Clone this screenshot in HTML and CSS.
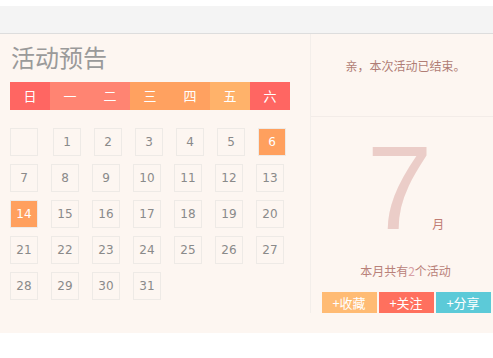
FILE: index.html
```html
<!DOCTYPE html>
<html lang="zh-CN">
<head>
    <meta charset="UTF-8" />
    <meta name="viewport" content="width=device-width, initial-scale=1.0" />
    <title>活动预告</title>
    <link rel="stylesheet" href="styles.css">
</head>
<body>
    <div class="topbar"></div>

    <div class="main">
        <div class="left">
            <h2 class="title">活动预告</h2>

            <div class="week">
                <span class="w-sun">日</span>
                <span class="w-a">一</span>
                <span class="w-a">二</span>
                <span class="w-b">三</span>
                <span class="w-b">四</span>
                <span class="w-c">五</span>
                <span class="w-sun">六</span>
            </div>

            <div class="days">
                <div class="row">
                    <span class="day blank"></span>
                    <span class="day">1</span>
                    <span class="day">2</span>
                    <span class="day">3</span>
                    <span class="day">4</span>
                    <span class="day">5</span>
                    <span class="day on">6</span>
                </div>
                <div class="row">
                    <span class="day">7</span>
                    <span class="day">8</span>
                    <span class="day">9</span>
                    <span class="day">10</span>
                    <span class="day">11</span>
                    <span class="day">12</span>
                    <span class="day">13</span>
                </div>
                <div class="row">
                    <span class="day on">14</span>
                    <span class="day">15</span>
                    <span class="day">16</span>
                    <span class="day">17</span>
                    <span class="day">18</span>
                    <span class="day">19</span>
                    <span class="day">20</span>
                </div>
                <div class="row">
                    <span class="day">21</span>
                    <span class="day">22</span>
                    <span class="day">23</span>
                    <span class="day">24</span>
                    <span class="day">25</span>
                    <span class="day">26</span>
                    <span class="day">27</span>
                </div>
                <div class="row">
                    <span class="day">28</span>
                    <span class="day">29</span>
                    <span class="day">30</span>
                    <span class="day">31</span>
                </div>
            </div>
        </div>

        <div class="right">
            <div class="notice">亲，本次活动已结束。</div>
            <div class="month">
                <div class="big">7<span class="unit">月</span></div>
                <p class="count">本月共有<em>2</em>个活动</p>
                <div class="actions">
                    <button class="btn btn-fav">+收藏</button>
                    <button class="btn btn-follow">+关注</button>
                    <button class="btn btn-share">+分享</button>
                </div>
            </div>
        </div>
    </div>
</body>
</html>
```

FILE: styles.css
```css
body {
    margin: 0;
    overflow: hidden;
    background-color: #fff;
    font-family: "Noto Sans CJK SC", "Liberation Sans", sans-serif;
}

.topbar {
    margin-top: 6px;
    height: 27px;
    background-color: #f4f4f4;
    border-bottom: 1px solid #dddddd;
}

.main {
    display: flex;
    width: 500px;
    padding-bottom: 20px;
    background-color: #fdf6f1;
}

.left {
    width: 300px;
    padding: 0 0 0 10px;
}

.title {
    margin: 8px 0 0 1px;
    font-size: 24px;
    line-height: 30px;
    font-weight: normal;
    color: #9a9a9a;
}

.week {
    display: flex;
    margin-top: 10px;
}

.week span {
    width: 40px;
    height: 28px;
    line-height: 28px;
    text-align: center;
    font-size: 13px;
    color: #fff;
}

.w-sun { background-color: #ff6662; }
.w-a { background-color: #ff8472; }
.w-b { background-color: #ffa160; }
.w-c { background-color: #ffb26a; }

.days {
    display: flex;
    flex-direction: column;
    gap: 8px;
    margin-top: 18px;
}

.row {
    display: flex;
    gap: 13px;
}

.day {
    box-sizing: border-box;
    width: 28px;
    height: 28px;
    line-height: 26px;
    border: 1px solid #eeeae6;
    text-align: center;
    font-family: "DejaVu Sans", sans-serif;
    font-size: 12px;
    color: #8a8a8a;
}

.day.blank {
    margin-right: 2px;
}

.day.on {
    background-color: #ffa05e;
    color: #fff;
}

.right {
    width: 189px;
    border-left: 1px solid #f3eeea;
}

.notice {
    height: 59px;
    padding-top: 23px;
    border-bottom: 1px solid #f3ece8;
    text-align: center;
    font-size: 12px;
    line-height: 18px;
    color: #b07d75;
}

.month {
    text-align: center;
}

.big {
    margin-top: 11px;
    height: 120px;
    line-height: 120px;
    font-family: "Liberation Sans", sans-serif;
    font-size: 118px;
    color: #ebcdc8;
    padding-left: 0;
}

.unit {
    margin-left: 0;
    font-family: "Noto Sans CJK SC", sans-serif;
    font-size: 12px;
    color: #c07d74;
}

.count {
    margin: 14px 0 0;
    font-size: 12px;
    line-height: 18px;
    color: #b98179;
}

.count em {
    font-style: normal;
    color: #d8a0a8;
}

.actions {
    display: flex;
    justify-content: center;
    gap: 2px;
    margin-top: 12px;
    padding-left: 1px;
}

.btn {
    width: 55px;
    height: 21px;
    padding: 0;
    border: none;
    font-family: "Noto Sans CJK SC", sans-serif;
    font-size: 13px;
    line-height: 21px;
    color: #fff;
    cursor: pointer;
}

.btn-fav { background-color: #ffbb74; }
.btn-follow { background-color: #ff705e; }
.btn-share { background-color: #5ccad8; }
```
